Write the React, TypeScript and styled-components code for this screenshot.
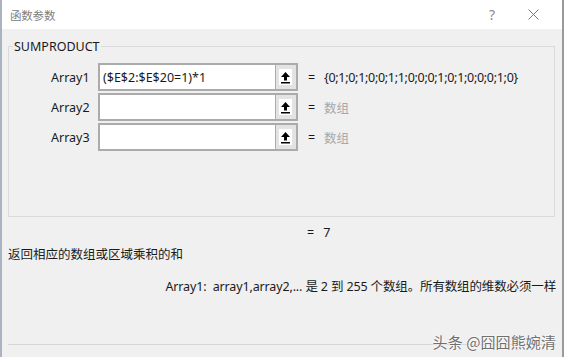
import React from "react";
import styled, { createGlobalStyle } from "styled-components";

const Global = createGlobalStyle`
  html, body { margin: 0; padding: 0; background: #6b8fb5; }
  body { font-family: "Noto Sans", "Noto Sans CJK SC", sans-serif; font-size: 12px; color: #1a1a1a; }
  * { box-sizing: border-box; }
`;

const Window = styled.div`
  width: 564px;
  height: 357px;
  background: #f0f0f0;
  border-left: 2px solid #a9b4c0;
  border-right: 2px solid #9a9a9a;
  display: flex;
  flex-direction: column;
  position: relative;
  overflow: hidden;
`;

const TitleBar = styled.div`
  height: 29px;
  background: #ffffff;
  display: flex;
  align-items: center;
  padding-left: 8px;
  flex-shrink: 0;
`;

const Title = styled.div`
  flex: 1;
  color: #808080;
  font-family: "Noto Sans CJK SC", sans-serif;
  font-size: 11.5px;
  letter-spacing: -0.2px;
`;

const TitleBtn = styled.div<{ $w: number }>`
  width: ${(p) => p.$w}px;
  height: 29px;
  display: flex;
  align-items: center;
  justify-content: center;
  color: #8a8a8a;
  font-size: 14px;
`;

const Body = styled.div`
  padding: 0 6px;
  display: flex;
  flex-direction: column;
  flex: 1;
`;

const Group = styled.fieldset`
  margin: 9px 0 0 0;
  padding: 0;
  border: 1px solid #dadada;
  height: 179px;
  width: 547px;
  min-width: 0;
`;

const Legend = styled.legend`
  padding: 0 1px;
  margin-left: 4px;
  font-size: 12.5px;
  color: #1a1a1a;
`;

const Rows = styled.div`
  padding: 8px 0 0 42px;
  display: flex;
  flex-direction: column;
  gap: 2px;
`;

const Row = styled.div`
  display: flex;
  align-items: center;
  height: 28px;
`;

const Label = styled.div`
  width: 47px;
  font-size: 12.5px;
`;

const InputBox = styled.div`
  width: 200px;
  height: 28px;
  border: 2px solid #ababab;
  display: flex;
  background: #ffffff;
`;

const Field = styled.div`
  flex: 1;
  display: flex;
  align-items: center;
  padding-left: 3px;
  font-size: 12.5px;
  border-right: 1px solid #ababab;
`;

const RefBtn = styled.div`
  width: 20px;
  background: #e3e3e3;
  display: flex;
  align-items: center;
  justify-content: center;
  padding-right: 2px;
`;

const IconSquare = styled.div`
  width: 13px;
  height: 16px;
  background: #ffffff;
  display: flex;
  align-items: center;
  justify-content: center;
`;

const Eq = styled.div`
  width: 26px;
  padding-left: 10px;
  font-size: 12.5px;
`;

const Value = styled.div<{ $muted?: boolean }>`
  font-size: 12.5px;
  color: ${(p) => (p.$muted ? "#a8a8a8" : "#1a1a1a")};
  letter-spacing: ${(p) => (p.$muted ? "0" : "-0.3px")};
  font-family: ${(p) => (p.$muted ? `"Noto Sans CJK SC", sans-serif` : `"Noto Sans", sans-serif`)};
`;

const Result = styled.div`
  margin-top: 6px;
  padding-left: 299px;
  height: 18px;
  display: flex;
  align-items: center;
  font-size: 12.5px;
  gap: 9px;
`;

const Desc = styled.div`
  margin-top: 3px;
  font-family: "Noto Sans CJK SC", sans-serif;
  font-size: 12.5px;
  height: 18px;
  display: flex;
  align-items: center;
`;

const Help = styled.div`
  margin-top: 14px;
  height: 18px;
  display: flex;
  align-items: center;
  justify-content: flex-end;
  font-size: 12.5px;
  letter-spacing: -0.14px;
  white-space: nowrap;
`;

const Separator = styled.div`
  margin-top: 50px;
  border-top: 1px solid #d7d7d7;
  width: 548px;
`;

const Watermark = styled.div`
  position: absolute;
  right: 6px;
  top: 331px;
  font-family: "Noto Sans CJK SC", sans-serif;
  font-size: 15px;
  color: #707070;
  text-shadow: 0 0 2px #ffffff, 0 0 2px #ffffff;
  letter-spacing: 0.1px;
`;

const UpArrow = () => (
  <svg width="11" height="13" viewBox="0 0 11 13">
    <path d="M5.5 1 L10 6 L7 6 L7 9.5 L4 9.5 L4 6 L1 6 Z" fill="#000" />
    <rect x="1" y="11" width="9" height="1.5" fill="#000" />
  </svg>
);

const args = [
  { name: "Array1", value: "($E$2:$E$20=1)*1", result: "{0;1;0;1;0;0;1;1;0;0;0;1;0;1;0;0;0;1;0}" },
  { name: "Array2", value: "", result: "数组" },
  { name: "Array3", value: "", result: "数组" },
];

export default function App() {
  return (
    <>
      <Global />
      <Window>
        <TitleBar>
          <Title>函数参数</Title>
          <TitleBtn $w={24}>?</TitleBtn>
          <TitleBtn $w={58}>
            <svg width="11" height="11" viewBox="0 0 11 11">
              <path d="M0.5 0.5 L10.5 10.5 M10.5 0.5 L0.5 10.5" stroke="#7a7a7a" strokeWidth="1" />
            </svg>
          </TitleBtn>
        </TitleBar>
        <Body>
          <Group>
            <Legend>SUMPRODUCT</Legend>
            <Rows>
              {args.map((a) => (
                <Row key={a.name}>
                  <Label>{a.name}</Label>
                  <InputBox>
                    <Field>{a.value}</Field>
                    <RefBtn>
                      <IconSquare>
                        <UpArrow />
                      </IconSquare>
                    </RefBtn>
                  </InputBox>
                  <Eq>=</Eq>
                  <Value $muted={!a.value}>{a.result}</Value>
                </Row>
              ))}
            </Rows>
          </Group>
          <Result>
            <span>=</span>
            <span>7</span>
          </Result>
          <Desc>返回相应的数组或区域乘积的和</Desc>
          <Help>
            Array1:&nbsp;&nbsp;array1,array2,... 是 2 到 255 个数组。所有数组的维数必须一样
          </Help>
          <Separator />
        </Body>
        <Watermark>头条 @囧囧熊婉清</Watermark>
      </Window>
    </>
  );
}
